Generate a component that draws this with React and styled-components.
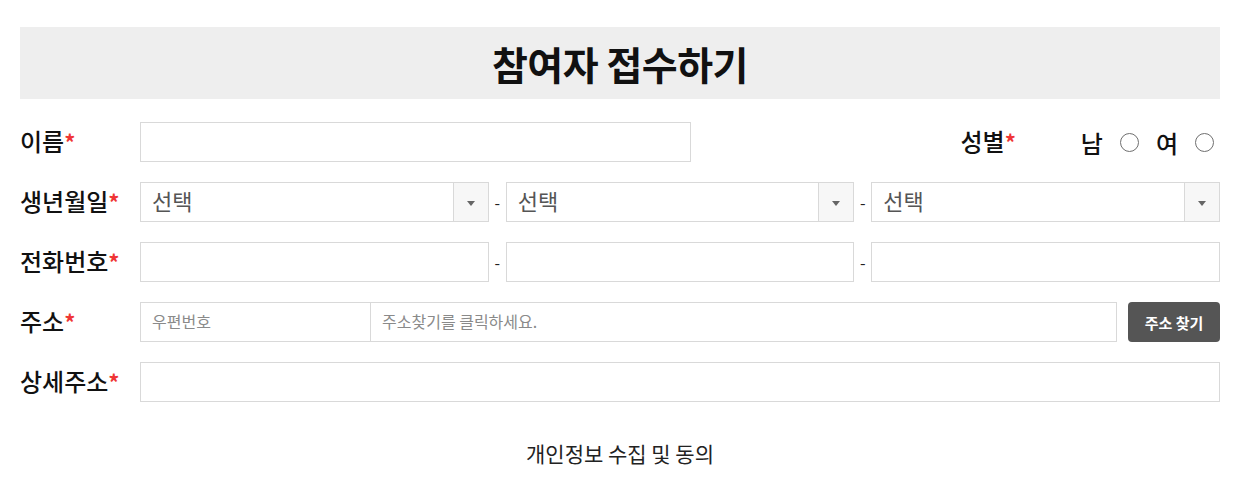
import React from 'react';
import styled, { createGlobalStyle } from 'styled-components';

const GlobalStyle = createGlobalStyle`
  body {
    margin: 0;
    background: #fff;
    font-family: "Noto Sans CJK KR", "Noto Sans", sans-serif;
    color: #111;
  }
`;

const Wrap = styled.div`
  width: 1200px;
  margin: 27px 0 0 20px;
`;

const Header = styled.h1`
  margin: 0;
  height: 72px;
  background: #eeeeee;
  display: flex;
  align-items: center;
  justify-content: center;
  font-size: 39px;
  font-weight: 700;
  letter-spacing: -0.5px;
  color: #111;
`;

const Form = styled.div`
  display: flex;
  flex-direction: column;
  gap: 20px;
  margin-top: 23px;
`;

const Row = styled.div`
  display: flex;
  align-items: center;
  height: 40px;
`;

const Label = styled.div`
  width: ${(p) => p.$width || 120}px;
  flex-shrink: 0;
  padding-bottom: 3px;
  font-size: 24px;
  font-weight: 500;
  color: #111;
  text-align: ${(p) => p.$align || 'left'};
`;

const Star = styled.span`
  color: #ef3535;
  font-size: 22px;
  font-weight: 700;
`;

const Input = styled.input`
  box-sizing: border-box;
  height: 40px;
  width: ${(p) => (p.$width ? `${p.$width}px` : 'auto')};
  flex: ${(p) => (p.$grow ? 1 : 'none')};
  min-width: 0;
  border: 1px solid #d9d9d9;
  background: #fff;
  padding: 0 11px 2px;
  font-family: inherit;
  font-size: 16px;
  color: #333;
  outline: none;
  &::placeholder { color: #8a8a8a; }
`;

const SelectBox = styled.div`
  box-sizing: border-box;
  flex: 1;
  height: 40px;
  border: 1px solid #d9d9d9;
  display: flex;
  align-items: stretch;
`;

const SelectText = styled.div`
  flex: 1;
  display: flex;
  align-items: center;
  padding: 0 0 4px 11px;
  font-size: 22px;
  color: #555;
`;

const Arrow = styled.div`
  width: 34px;
  background: #f7f7f7;
  border-left: 1px solid #d9d9d9;
  display: flex;
  align-items: center;
  justify-content: center;
  &::after {
    content: '';
    border-left: 4.5px solid transparent;
    border-right: 4.5px solid transparent;
    border-top: 5px solid #666;
    margin-top: 2px;
  }
`;

const Dash = styled.span`
  width: 17px;
  text-align: center;
  font-size: 16px;
  color: #222;
`;

const Gender = styled.div`
  margin-left: auto;
  margin-right: 6px;
  display: flex;
  align-items: center;
`;

const Option = styled.label`
  display: flex;
  align-items: center;
  font-size: 24px;
  font-weight: 500;
  margin-left: ${(p) => p.$gap}px;
`;

const Radio = styled.input.attrs({ type: 'radio' })`
  appearance: none;
  width: 19px;
  height: 19px;
  margin: 0 0 0 17px;
  border: 1px solid #6f6f6f;
  border-radius: 50%;
  background: #fff;
`;

const Button = styled.button`
  margin-left: 11px;
  width: 92px;
  height: 40px;
  border: none;
  border-radius: 4px;
  background: #555555;
  color: #fff;
  font-family: inherit;
  font-size: 15px;
  font-weight: 700;
`;

const Agree = styled.div`
  margin-top: 36px;
  text-align: center;
  font-size: 21px;
  color: #222;
`;

const Req = ({ children, width, align }) => (
  <Label $width={width} $align={align}>
    {children}
    <Star>*</Star>
  </Label>
);

const Select = () => (
  <SelectBox>
    <SelectText>선택</SelectText>
    <Arrow />
  </SelectBox>
);

export default function App() {
  return (
    <>
      <GlobalStyle />
      <Wrap>
        <Header>참여자 접수하기</Header>
        <Form>
          <Row>
            <Req>이름</Req>
            <Input $width={551} />
            <Gender>
              <Req width={60} align="right">성별</Req>
              <Option $gap={65}>남<Radio name="g" /></Option>
              <Option $gap={17}>여<Radio name="g" /></Option>
            </Gender>
          </Row>
          <Row>
            <Req>생년월일</Req>
            <Select />
            <Dash>-</Dash>
            <Select />
            <Dash>-</Dash>
            <Select />
          </Row>
          <Row>
            <Req>전화번호</Req>
            <Input $grow />
            <Dash>-</Dash>
            <Input $grow />
            <Dash>-</Dash>
            <Input $grow />
          </Row>
          <Row>
            <Req>주소</Req>
            <Input $width={231} placeholder="우편번호" />
            <Input $grow placeholder="주소찾기를 클릭하세요." style={{ marginLeft: -1 }} />
            <Button>주소 찾기</Button>
          </Row>
          <Row>
            <Req>상세주소</Req>
            <Input $grow />
          </Row>
        </Form>
        <Agree>개인정보 수집 및 동의</Agree>
      </Wrap>
    </>
  );
}
